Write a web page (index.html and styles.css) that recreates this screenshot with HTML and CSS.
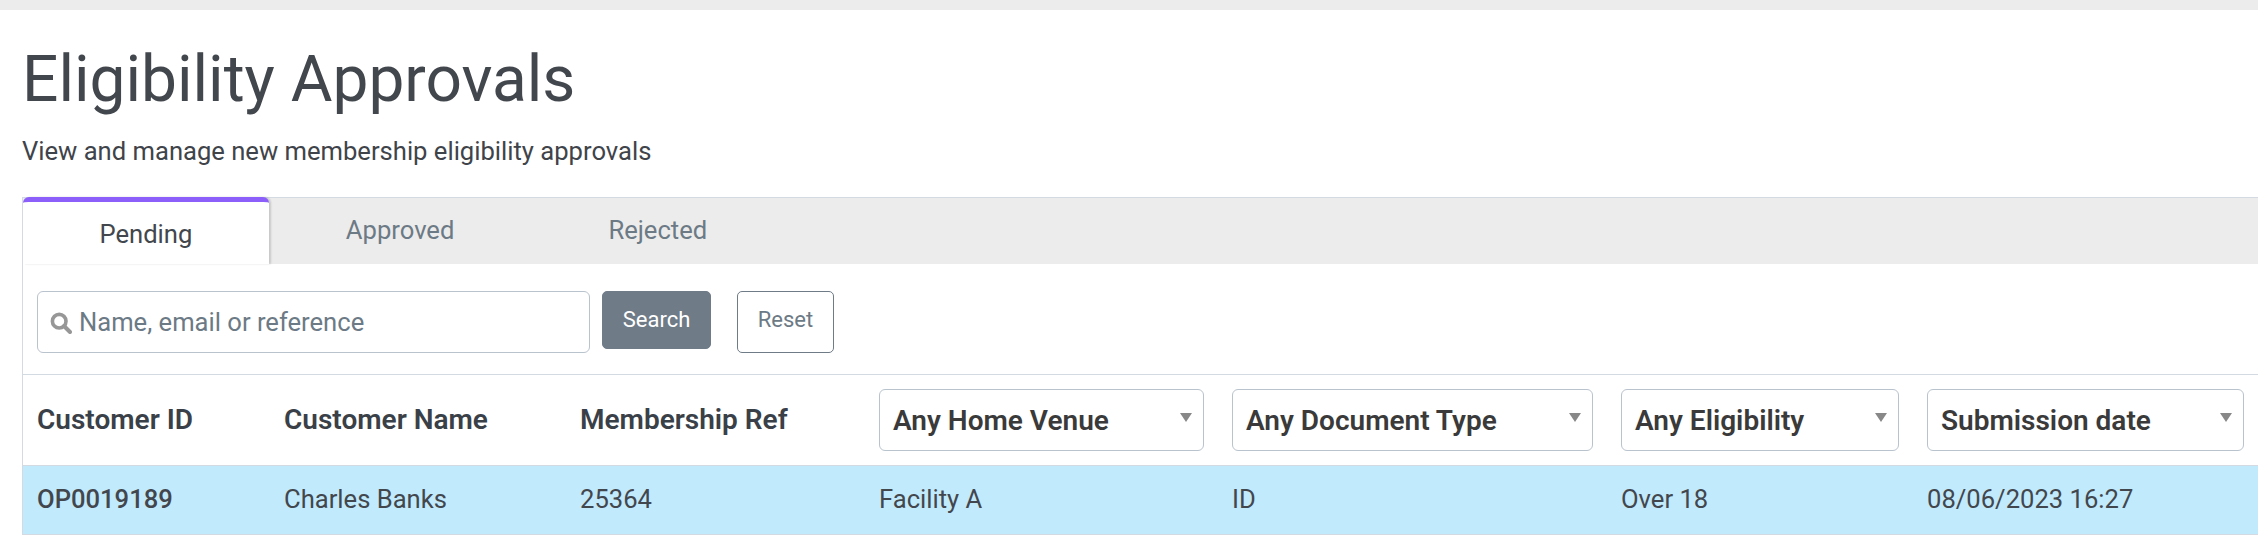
FILE: index.html
```html
<!DOCTYPE html>
<html lang="en">
<head>
<meta charset="utf-8">
<title>Eligibility Approvals</title>
<link rel="stylesheet" href="styles.css">
</head>
<body>
<div class="topbar"></div>
<main class="page">
  <h1 class="title">Eligibility Approvals</h1>
  <p class="subtitle">View and manage new membership eligibility approvals</p>
  <section class="card">
    <nav class="tabs">
      <a class="tab active">Pending</a>
      <a class="tab">Approved</a>
      <a class="tab">Rejected</a>
    </nav>
    <form class="filters">
      <label class="search">
        <svg class="search-icon" viewBox="0 0 22 22" width="22" height="22" aria-hidden="true"><circle cx="9.2" cy="9.2" r="6.8" fill="none" stroke="#979797" stroke-width="3.6"/><path d="M14 14 20 20" fill="none" stroke="#979797" stroke-width="4" stroke-linecap="round"/></svg>
        <input class="search-input" type="text" placeholder="Name, email or reference">
      </label>
      <button class="btn btn-primary" type="button">Search</button>
      <button class="btn btn-outline" type="button">Reset</button>
    </form>
    <table class="table">
      <colgroup>
        <col class="c1"><col class="c2"><col class="c3"><col class="c4"><col class="c5"><col class="c6"><col class="c7">
      </colgroup>
      <thead>
        <tr>
          <th>Customer ID</th>
          <th>Customer Name</th>
          <th>Membership Ref</th>
          <th><div class="select"><span>Any Home Venue</span><i class="caret"></i></div></th>
          <th><div class="select"><span>Any Document Type</span><i class="caret"></i></div></th>
          <th><div class="select"><span>Any Eligibility</span><i class="caret"></i></div></th>
          <th><div class="select"><span>Submission date</span><i class="caret"></i></div></th>
        </tr>
      </thead>
      <tbody>
        <tr class="highlight">
          <td class="strong">OP0019189</td>
          <td>Charles Banks</td>
          <td>25364</td>
          <td>Facility A</td>
          <td>ID</td>
          <td>Over 18</td>
          <td>08/06/2023 16:27</td>
        </tr>
      </tbody>
    </table>
  </section>
</main>
</body>
</html>
```
FILE: styles.css
```css
* { box-sizing: border-box; }
html, body {
  margin: 0;
  height: 556px;
  overflow: hidden;
  background: #fff;
}
body {
  font-family: Roboto, "Liberation Sans", sans-serif;
  color: #42474d;
}
.topbar { height: 10px; background: #ececec; }
.page { padding: 0 0 0 22px; width: 2258px; }
.title {
  margin: 0;
  padding-top: 33px;
  font-size: 64px;
  line-height: 74px;
  font-weight: 400;
  color: #42474d;
}
.subtitle {
  margin: 0;
  padding-top: 19px;
  font-size: 25.6px;
  line-height: 30px;
  color: #3f444a;
}
.card {
  margin-top: 31px;
  border-left: 1px solid #d3dae2;
  width: 2236px;
}
.tabs {
  display: flex;
  height: 67px;
  background: #ececec;
  border-top: 1px solid #d3dae2;
}
.tab {
  padding: 17px 77px 0;
  font-size: 25.6px;
  line-height: 30px;
  color: #6c7a86;
}
.tab.active {
  margin-top: -1px;
  height: 67px;
  padding: 17px 76.5px 0;
  background: #fff;
  color: #42474d;
  border-top: 5px solid #8c5ffa;
  border-radius: 6px 6px 0 0;
  box-shadow: 2px 0 2px rgba(0, 0, 0, 0.15);
}
.filters {
  display: flex;
  align-items: flex-start;
  height: 111px;
  padding: 27px 0 0 14px;
  border-bottom: 1px solid #d3dae2;
}
.search {
  display: flex;
  align-items: center;
  width: 553px;
  height: 62px;
  padding: 0 12px;
  border: 1px solid #b9c3cd;
  border-radius: 6px;
}
.search-icon { flex: none; filter: blur(0.7px); margin-top: 2px; }
.search-input {
  flex: 1;
  min-width: 0;
  margin-left: 7px;
  border: 0;
  outline: 0;
  padding: 0;
  font: 25.6px/30px Roboto, sans-serif;
  color: #6c7a86;
  background: transparent;
}
.search-input::placeholder { color: #6c7a86; opacity: 1; }
.btn {
  font-family: Roboto, sans-serif;
  font-size: 22px;
  border-radius: 5px;
  padding: 0 0 2px;
}
.btn-primary {
  margin-left: 12px;
  width: 109px;
  height: 58px;
  background: #6f7b87;
  border: 1px solid #6f7b87;
  color: #fff;
}
.btn-outline {
  margin-left: 26px;
  width: 97px;
  height: 62px;
  padding-bottom: 6px;
  background: #fff;
  border: 1px solid #6f7b87;
  color: #6c7a86;
}
.table {
  border-collapse: collapse;
  table-layout: fixed;
  width: 2235px;
  font-size: 25.6px;
}
.c1 { width: 247px; }
.c2 { width: 296px; }
.c3 { width: 299px; }
.c4 { width: 353px; }
.c5 { width: 389px; }
.c6 { width: 306px; }
.c7 { width: 345px; }
.table th, .table td {
  padding: 0 14px;
  text-align: left;
  white-space: nowrap;
}
.table th {
  height: 90px;
  font-size: 28px;
  font-weight: 600;
  color: #3a4047;
  border-bottom: 1px solid #d3dae2;
}
.table td {
  height: 69px;
  padding-bottom: 2px;
  color: #42474d;
  border-bottom: 1px solid #d3dae2;
}
.table td.strong { font-weight: 500; }
.highlight { background: #c2eafd; }
.select {
  display: flex;
  align-items: center;
  justify-content: space-between;
  width: 100%;
  height: 62px;
  padding: 2px 11px 0 13px;
  border: 1px solid #b9c3cd;
  border-radius: 6px;
  background: #fff;
  color: #3a3a3a;
}
.caret {
  flex: none;
  width: 0;
  height: 0;
  margin-top: -6px;
  border-left: 6px solid transparent;
  border-right: 6px solid transparent;
  border-top: 9px solid #888;
}
```
